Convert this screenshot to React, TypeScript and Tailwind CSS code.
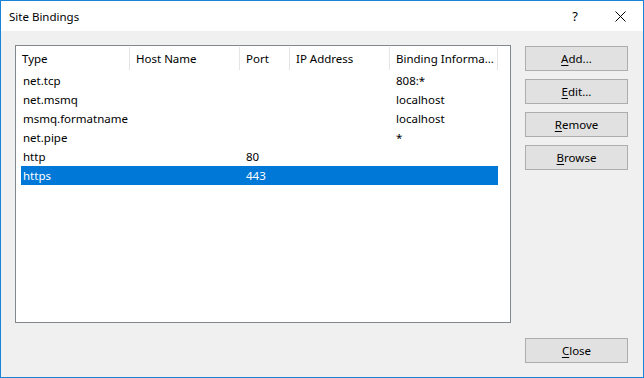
const font = { fontFamily: '"Noto Sans", "Segoe UI", Arial, sans-serif' };

const columns = [
  { name: "Type", w: "w-[114px]", rw: "w-[109px]" },
  { name: "Host Name", w: "w-[110px]", rw: "w-[110px]" },
  { name: "Port", w: "w-[50px]", rw: "w-[50px]" },
  { name: "IP Address", w: "w-[100px]", rw: "w-[100px]" },
  { name: "Binding Informa...", w: "w-[108px]", rw: "w-[108px]" },
];

const rows = [
  ["net.tcp", "", "", "", "808:*"],
  ["net.msmq", "", "", "", "localhost"],
  ["msmq.formatname", "", "", "", "localhost"],
  ["net.pipe", "", "", "", "*"],
  ["http", "", "80", "", ""],
  ["https", "", "443", "", ""],
];

function Btn({ k, rest, className = "" }: { k: string; rest: string; className?: string }) {
  return (
    <button
      className={`h-[25px] w-[103px] border border-[#adadad] bg-[#e1e1e1] text-[11.5px] text-black leading-none ${className}`}
    >
      <u className="underline-offset-[2px]">{k}</u>
      {rest}
    </button>
  );
}

export default function App() {
  return (
    <div
      className="flex h-[378px] w-[644px] flex-col border border-[#1883d7] bg-[#f0f0f0] text-[11.5px] text-black"
      style={font}
    >
      <div className="flex h-[30px] items-center bg-white pl-[8px] pt-[1px]">
        <span>Site Bindings</span>
        <span className="ml-auto mr-[37px] text-[13px]">?</span>
        <svg width="11" height="11" viewBox="0 0 11 11" className="mr-[17px]">
          <path d="M0.5 0.5 L10.5 10.5 M10.5 0.5 L0.5 10.5" stroke="#000" strokeWidth="1" />
        </svg>
      </div>

      <div className="flex flex-1 px-[14px] pt-[14px] pb-[14px]">
        <div className="h-[278px] w-[496px] border border-[#828790] bg-white">
          <div className="flex h-[25px]">
            {columns.map((c) => (
              <div
                key={c.name}
                className={`${c.w} my-[1px] flex items-center overflow-hidden whitespace-nowrap border-r border-[#e5e5e5] pl-[6px]`}
              >
                {c.name}
              </div>
            ))}
          </div>
          <div className="ml-[5px]">
            {rows.map((r, i) => {
              const sel = i === rows.length - 1;
              return (
                <div
                  key={r[0]}
                  className={`flex h-[19px] w-[477px] items-center pt-[1px] ${sel ? "bg-[#0078d7] text-white" : ""}`}
                >
                  {r.map((cell, j) => (
                    <div
                      key={j}
                      className={`${columns[j].rw} ${j === 0 ? "pl-[2px]" : "pl-[6px]"} whitespace-nowrap`}
                    >
                      {cell}
                    </div>
                  ))}
                </div>
              );
            })}
          </div>
        </div>

        <div className="ml-[14px] flex flex-col">
          <div className="mt-[1px] flex flex-col gap-[8px]">
            <Btn k="A" rest="dd..." />
            <Btn k="E" rest="dit..." />
            <Btn k="R" rest="emove" />
            <Btn k="B" rest="rowse" />
          </div>
          <Btn k="C" rest="lose" className="mt-auto" />
        </div>
      </div>
    </div>
  );
}
